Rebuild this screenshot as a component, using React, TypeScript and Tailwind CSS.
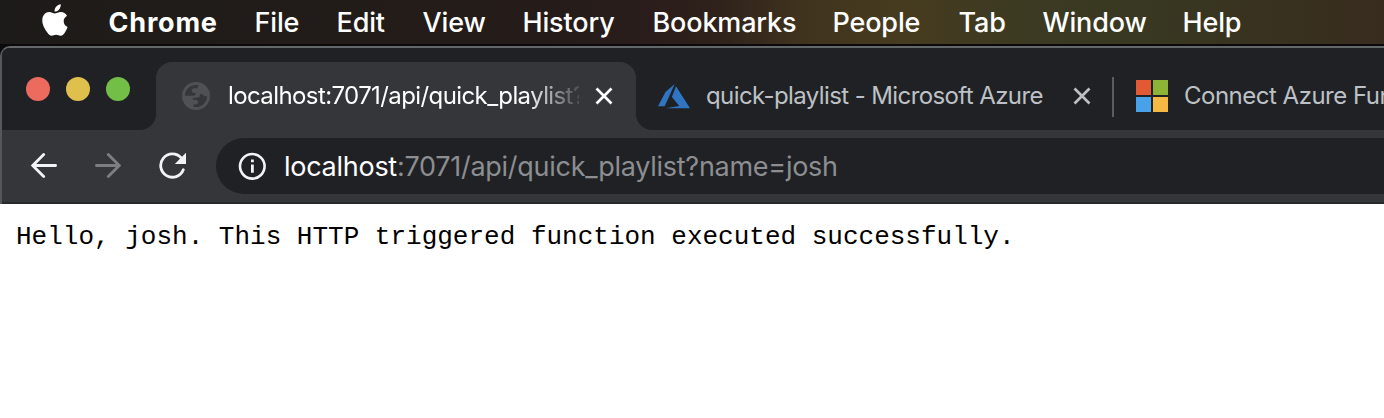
import React from "react";

const menus = [
  { label: "File", cls: "w-[82px]" },
  { label: "Edit", cls: "w-[86px]" },
  { label: "View", cls: "w-[100px]" },
  { label: "History", cls: "w-[130px]" },
  { label: "Bookmarks", cls: "w-[180px]" },
  { label: "People", cls: "w-[126px]" },
  { label: "Tab", cls: "w-[84px]" },
  { label: "Window", cls: "w-[140px]" },
  { label: "Help", cls: "w-[80px]" },
];

function Close({ className }: { className: string }) {
  return (
    <svg className={className} width="18" height="18" viewBox="0 0 18 18" fill="none" stroke="currentColor" strokeWidth="2.7">
      <path d="M1.5 1.5l15 15M16.5 1.5l-15 15" />
    </svg>
  );
}

function MenuBar() {
  return (
    <header className="flex h-11 items-center bg-[linear-gradient(90deg,#1d1b19_0%,#221c19_25%,#251c19_40%,#2a1d1b_47%,#2f221b_52%,#40331e_58%,#463b1f_65%,#3c3a22_74%,#383721_84%,#38311f_93%,#382c1f_100%)] text-[27px] leading-[44px] text-white">
      <svg className="ml-[42px] mt-[-4px] shrink-0" width="27" height="32" viewBox="0 0 27 32" fill="currentColor">
        <path d="M18.7.2c.3 2-.5 3.900-1.700 5.300-1.200 1.400-2.700 2.200-4.400 2.100-.2-1.900.6-3.700 1.700-5C15.400 1.300 17.100.4 18.700.2z" />
        <path d="M25 11.700c-2.200 1.400-3.300 3.200-3.300 5.500 0 2.700 1.500 4.800 3.900 5.800-.7 2.100-1.700 4.100-3 5.900-1.100 1.600-2.300 2.800-4.100 2.800-1.700 0-2.300-1-4.400-1s-2.800 1-4.400 1c-1.900 0-3.200-1.500-4.400-3.200C3 25.300.3 20.900.3 16.400c0-5.200 3.300-8.300 6.900-8.300 2.100 0 4 1.400 5.700 1.400 1.200 0 3.400-1.500 6.200-1.500 2.300 0 4.500 1.300 5.900 3.700z" />
      </svg>
      <span className="ml-[39.5px] w-[146px] shrink-0 whitespace-nowrap pt-0.5 font-bold tracking-[0.8px]">Chrome</span>
      {menus.map((m) => (
        <span key={m.label} className={`shrink-0 whitespace-nowrap pt-0.5 font-[450] tracking-[-0.15px] ${m.cls}`}>{m.label}</span>
      ))}
    </header>
  );
}

function TabStrip() {
  return (
    <div className="flex h-[82px] bg-[#35363a] text-[24px]">
      <div className="flex w-[154px] shrink-0 gap-4 rounded-br-2xl bg-[#202124] pl-6 pt-[29px]">
        <i className="size-6 rounded-full bg-[#ed6a5e]" />
        <i className="size-6 rounded-full bg-[#e0c04c]" />
        <i className="size-6 rounded-full bg-[#72be47]" />
      </div>
      <div className="w-[480px] shrink-0 bg-[#202124] pt-[14px]">
        <div className="flex h-[68px] items-center rounded-t-2xl bg-[#35363a] pl-[26px] text-white">
          <svg className="shrink-0" width="28" height="28" viewBox="0 0 28 28">
            <circle cx="14" cy="14" r="14" fill="#505155" />
            <path d="M2.900 13.300C3.200 7.500 8 2.900 14 2.900c1 0 1.900.1 2.800.4-.9 1.100-1.300 1.800-1.300 2.900h-3.300c-1.500 0-2.500 1.100-2.500 2.400 0 1.400 1.100 2.400 2.500 2.400h1.600c.2 1.700-.9 2.700-2.600 2.700H2.900z" fill="#35363a" />
            <path d="M11.500 24.800v-2.300h2.200c1.500 0 2.500-1 2.500-2.400s-1.100-2.400-2.500-2.400h-3.200c0-1.100.7-1.900 1.900-1.900h3.100c1.300 0 2.300-1 2.300-2.300V12h1.500c1.400 0 2.100 2.200 3.600 2.200h2.200C25 20.200 20.100 25.100 14 25.100c-.9 0-1.700-.1-2.500-.3z" fill="#35363a" />
          </svg>
          <div className="ml-[18px] w-[351px] shrink-0 overflow-hidden whitespace-nowrap tracking-[-0.6px] [mask-image:linear-gradient(90deg,#000_298px,transparent_358px)]">
            localhost:7071/api/quick_playlist?name=josh
          </div>
          <Close className="ml-4 shrink-0" />
        </div>
      </div>
      <div className="flex flex-1 items-center overflow-hidden whitespace-nowrap rounded-bl-2xl bg-[#202124] pl-[22px] pt-[14px] text-[#bdc1c6]">
        <svg className="mt-[1px] shrink-0" width="32" height="26" viewBox="0 0 32 26" fill="#3074c4">
          <path d="M16.700 0L7.500 8.100 0 22.200h6.700z" />
          <path d="M18 2.200l-4.100 10.700 7.400 9.100L7.500 24.300H32z" />
        </svg>
        <span className="ml-4 w-[367px] shrink-0 tracking-[-0.6px]">quick-playlist - Microsoft Azure</span>
        <Close className="shrink-0" />
        <div className="ml-[21px] mt-0.5 h-10 w-0.5 shrink-0 bg-[#5a5c60]" />
        <div className="ml-[22px] grid shrink-0 grid-cols-2 gap-0.5">
          <i className="size-[15px] bg-[#e15a33]" />
          <i className="size-[15px] bg-[#8cb436]" />
          <i className="size-[15px] bg-[#48a1e9]" />
          <i className="size-[15px] bg-[#f4b942]" />
        </div>
        <span className="ml-4 shrink-0 tracking-[-0.5px]">Connect Azure Functions</span>
      </div>
    </div>
  );
}

function Toolbar() {
  return (
    <div className="flex h-[74px] items-start border-b-2 border-[#28292c] bg-[#35363a] pt-2">
      <svg className="ml-[29px] mt-[15px] shrink-0" width="26" height="25" viewBox="0 0 26 25" fill="none" stroke="#f1f3f4" strokeWidth="2.800" strokeLinecap="round">
        <path d="M24.600 12.500H2M12.700 1.500L1.700 12.500l11 11" />
      </svg>
      <svg className="ml-[38px] mt-[15px] shrink-0" width="26" height="25" viewBox="0 0 26 25" fill="none" stroke="#7d7e81" strokeWidth="2.800" strokeLinecap="round">
        <path d="M1.400 12.500H24M13.300 1.500l11 11-11 11" />
      </svg>
      <svg className="ml-[38px] mt-[14px] shrink-0" width="28" height="28" viewBox="0 0 28 28">
        <path d="M22.200 5.800A11.700 11.700 0 1 0 24.300 17.800" fill="none" stroke="#f1f3f4" strokeWidth="2.800" strokeLinecap="round" />
        <path d="M27 .8v11.200H15.800z" fill="#f1f3f4" />
      </svg>
      <div className="ml-[29px] flex h-14 flex-1 items-center overflow-hidden whitespace-nowrap rounded-l-full bg-[#202124] pl-[22px] text-[27px] text-[#8c8e91]">
        <svg className="mr-[18px] shrink-0" width="28" height="28" viewBox="0 0 28 28">
          <circle cx="14.300" cy="14.300" r="12.300" fill="none" stroke="#f1f3f4" strokeWidth="2.600" />
          <path d="M13 7.500h2.800v2.800H13zM13 12.500h2.800V20.800H13z" fill="#f1f3f4" />
        </svg>
        <span className="pt-0.5 tracking-[-0.27px]"><span className="text-white">localhost</span>:7071/api/quick_playlist?name=josh</span>
      </div>
    </div>
  );
}

export default function App() {
  return (
    <div className="h-[418px] w-full overflow-hidden bg-white font-['Inter',sans-serif]">
      <MenuBar />
      <div className="bg-[#0b0909] pt-0.5">
        <div className="overflow-hidden rounded-tl-[10px] border-l-2 border-t-2 border-l-[#55575a] border-t-[#65686a]">
          <TabStrip />
          <Toolbar />
        </div>
      </div>
      <pre className="pl-4 pt-4 font-['Liberation_Mono',monospace] text-[26px] leading-[34px] text-black">
        Hello, josh. This HTTP triggered function executed successfully.
      </pre>
    </div>
  );
}
